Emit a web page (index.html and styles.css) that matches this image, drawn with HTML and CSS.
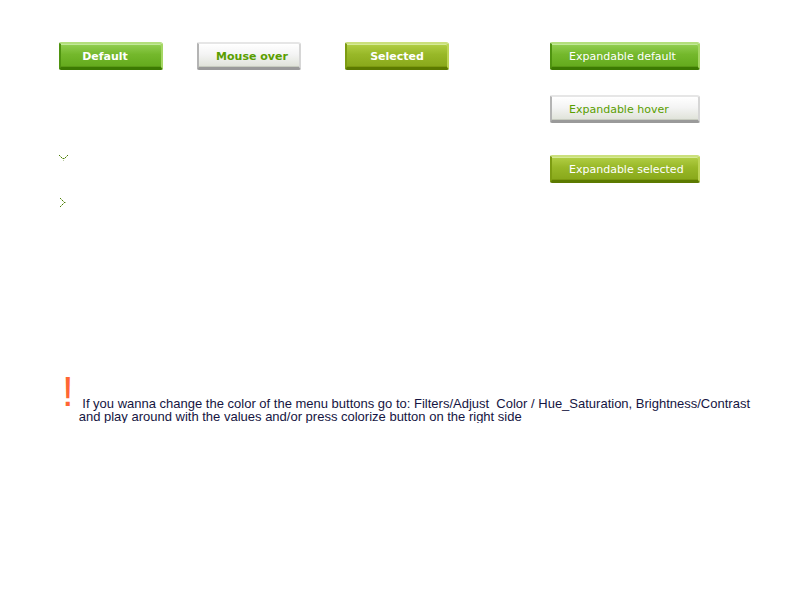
FILE: index.html
```html
<!DOCTYPE html>
<html>
<head>
<meta charset="utf-8">
<link rel="stylesheet" href="styles.css">
</head>
<body>
<div class="page">
  <div class="top">
    <div class="left-col">
      <div class="btn-row">
        <div class="btn btn-green btn-default">Default</div>
        <div class="btn btn-gray btn-hover">Mouse over</div>
        <div class="btn btn-olive btn-selected">Selected</div>
      </div>
      <div class="arrows">
        <svg class="arrow arrow-down" width="10" height="7" viewBox="0 0 10 7" shape-rendering="crispEdges">
          <rect x="0" y="0" width="1" height="1" fill="#4a7d06"/>
          <rect x="8" y="0" width="1" height="1" fill="#4a7d06"/>
          <rect x="1" y="1" width="1" height="1" fill="#a9c57c"/>
          <rect x="7" y="1" width="1" height="1" fill="#a9c57c"/>
          <rect x="2" y="2" width="1" height="1" fill="#4a7d06"/>
          <rect x="6" y="2" width="1" height="1" fill="#4a7d06"/>
          <rect x="3" y="3" width="1" height="1" fill="#a9c57c"/>
          <rect x="5" y="3" width="1" height="1" fill="#a9c57c"/>
          <rect x="4" y="3" width="1" height="1" fill="#4a7d06"/>
          <rect x="4" y="5" width="1" height="1" fill="#b8c8a0"/>
        </svg>
        <svg class="arrow arrow-right" width="8" height="9" viewBox="0 0 8 9" shape-rendering="crispEdges">
          <rect x="0" y="0" width="1" height="1" fill="#4a7d06"/>
          <rect x="1" y="1" width="1" height="1" fill="#a9c57c"/>
          <rect x="2" y="2" width="1" height="1" fill="#4a7d06"/>
          <rect x="3" y="3" width="1" height="1" fill="#a9c57c"/>
          <rect x="4" y="4" width="1" height="1" fill="#4a7d06"/>
          <rect x="5" y="4" width="1" height="1" fill="#b8c8a0"/>
          <rect x="3" y="5" width="1" height="1" fill="#a9c57c"/>
          <rect x="2" y="6" width="1" height="1" fill="#4a7d06"/>
          <rect x="1" y="7" width="1" height="1" fill="#a9c57c"/>
          <rect x="0" y="8" width="1" height="1" fill="#4a7d06"/>
        </svg>
      </div>
    </div>
    <div class="right-col">
      <div class="btn btn-green btn-exp">Expandable default</div>
      <div class="btn btn-gray btn-exp btn-exp-hover">Expandable hover</div>
      <div class="btn btn-olive btn-exp btn-exp-selected">Expandable selected</div>
    </div>
  </div>
  <div class="note">
    <span class="bang">!</span>
    <p class="note-text">&nbsp;If you wanna change the color of the menu buttons go to: Filters/Adjust &nbsp;Color / Hue_Saturation, Brightness/Contrast<br>and play around with the values and/or press colorize button on the right side</p>
  </div>
</div>
</body>
</html>
```

FILE: styles.css
```css
html, body {
  margin: 0;
  padding: 0;
  background: #ffffff;
}

.page {
  padding: 42px 0 0 59px;
  font-family: "DejaVu Sans", Verdana, sans-serif;
}

.top {
  display: flex;
  height: 335px;
}

.left-col {
  width: 491px;
  display: flex;
  flex-direction: column;
}

.btn-row {
  display: flex;
}

.btn {
  box-sizing: border-box;
  height: 28px;
  width: 104px;
  font-size: 11px;
  line-height: 26px;
  white-space: nowrap;
  text-align: center;
  border-radius: 2px 3px 2px 2px;
}

.btn-green {
  border-top: 2px solid #b3df7c;
  border-left: 2px solid #4f9310;
  border-right: 2px solid #a5d764;
  border-bottom: 3px solid #3c7a02;
  background: linear-gradient(#93cf52 0%, #74b82c 45%, #63aa1c 100%);
  box-shadow: inset 0 1px 0 #c2e899, inset 0 -1px 0 #5a9a16;
  color: #ffffff;
}

.btn-gray {
  border-top: 2px solid #e6e6e6;
  border-left: 2px solid #b4b4b4;
  border-right: 2px solid #d6d6d6;
  border-bottom: 3px solid #9a9a9a;
  background: linear-gradient(#ffffff 0%, #f4f4f4 45%, #dfe2d8 100%);
  box-shadow: inset 0 1px 0 #ffffff, inset 0 -1px 0 #c8ccc0;
  color: #5a9e00;
}

.btn-olive {
  border-top: 2px solid #cbe07c;
  border-left: 2px solid #7d9c12;
  border-right: 2px solid #bdd556;
  border-bottom: 3px solid #5c7a00;
  background: linear-gradient(#b2cf45 0%, #98b828 45%, #88a81a 100%);
  box-shadow: inset 0 1px 0 #d6ea98, inset 0 -1px 0 #7c9a10;
  color: #ffffff;
}

.btn-default,
.btn-hover,
.btn-selected {
  font-weight: bold;
}

.btn-default {
  padding-right: 12px;
}

.btn-hover {
  margin-left: 34px;
  padding-left: 6px;
}

.btn-selected {
  margin-left: 44px;
}

.arrows {
  display: flex;
  flex-direction: column;
  align-items: flex-start;
  padding-top: 85px;
}

.arrow {
  display: block;
}

.arrow-right {
  margin-top: 36px;
  margin-left: 1px;
}

.right-col {
  display: flex;
  flex-direction: column;
}

.btn-exp {
  width: 150px;
  text-align: left;
  padding-left: 17px;
}

.btn-exp-hover {
  margin-top: 25px;
}

.btn-exp-selected {
  margin-top: 32px;
}

.note {
  display: flex;
  align-items: flex-start;
  padding-left: 3px;
  font-family: "Liberation Sans", Arial, sans-serif;
}

.bang {
  color: #ff6633;
  font-size: 42px;
  line-height: 30px;
  height: 32px;
  font-family: "Liberation Sans", Arial, sans-serif;
}

.note-text {
  margin: 20px 0 0 5px;
  font-size: 13px;
  line-height: 13px;
  color: #151542;
  white-space: nowrap;
}
```
